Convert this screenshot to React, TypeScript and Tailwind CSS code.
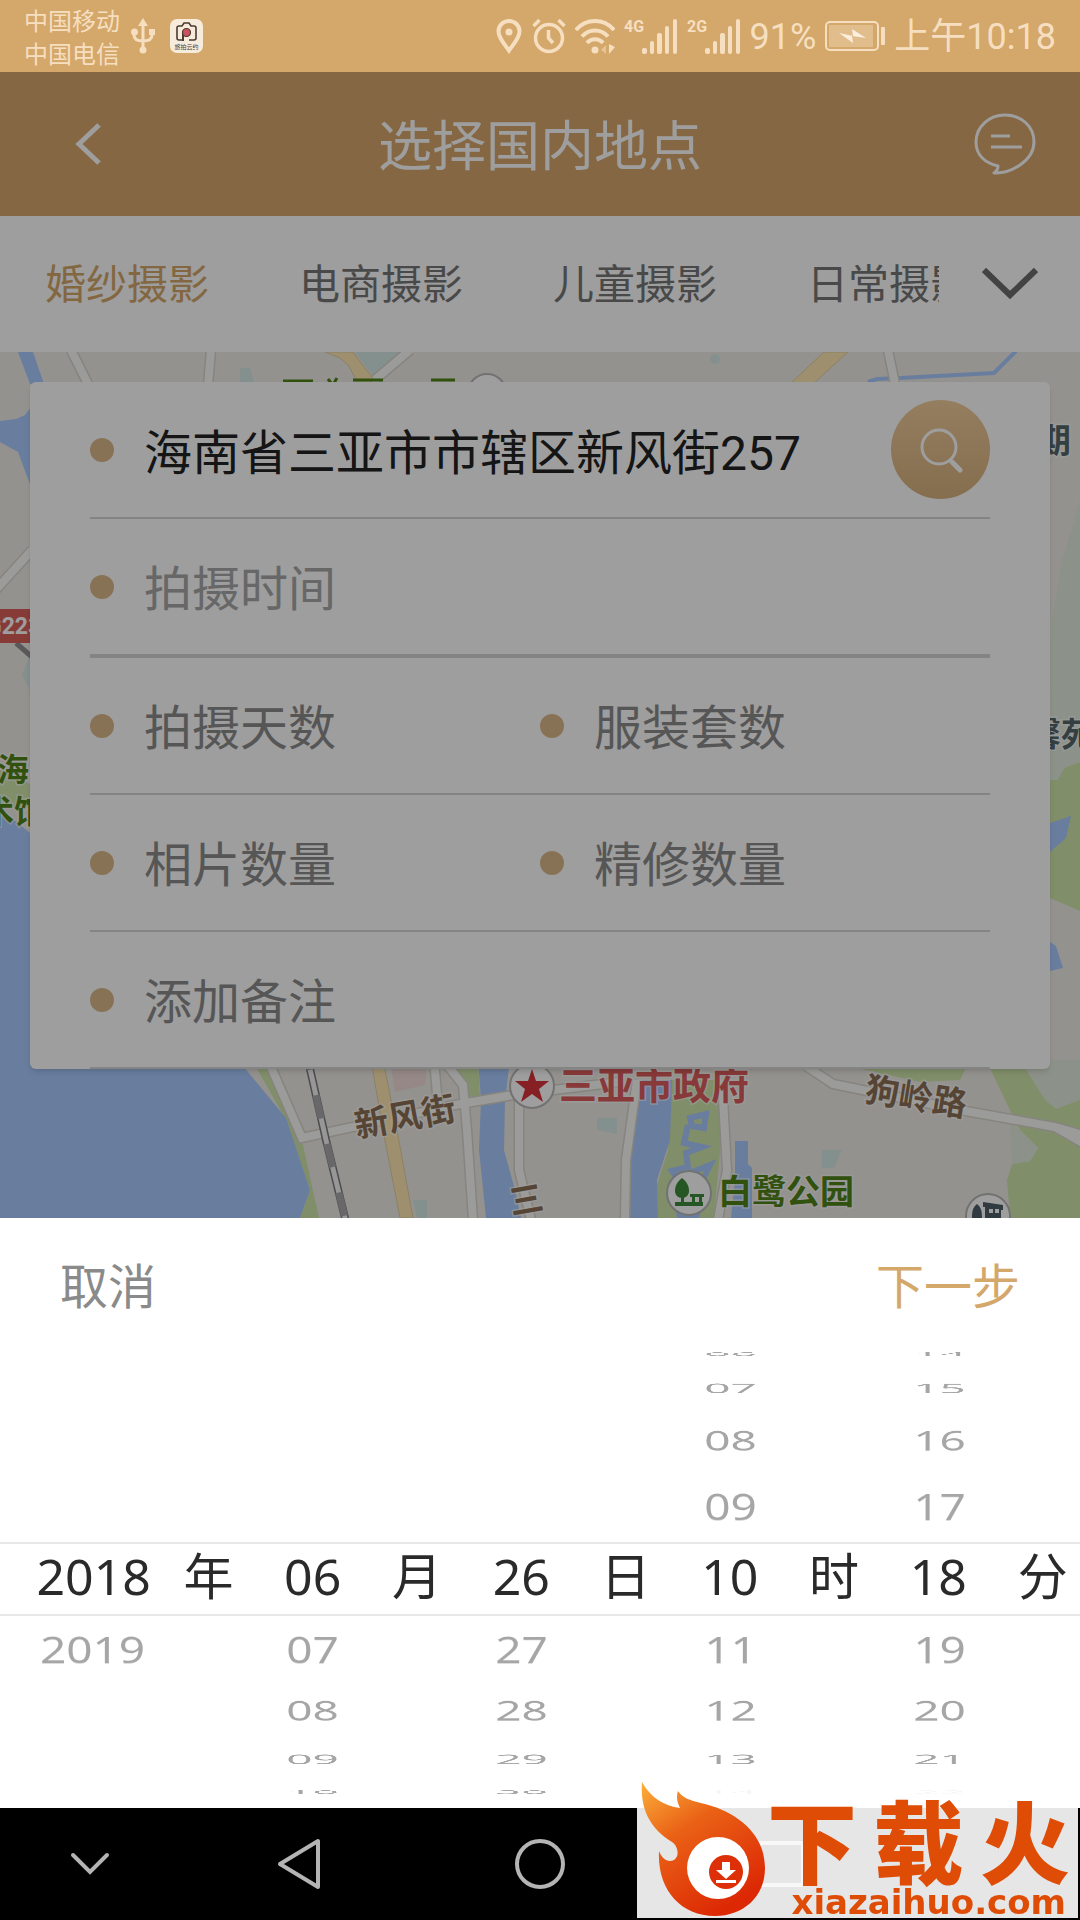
import React, { useState } from 'react';
import clsx from 'clsx';

const TABS = ['婚纱摄影', '电商摄影', '儿童摄影', '日常摄影'];

type WheelRow = { size: string; tilt: string; values: string[] };

// values are year, month, day, hour, minute
const ROWS_ABOVE: WheelRow[] = [
  { size: 'h-6', tilt: 'rotate-x-[84deg]', values: ['', '', '', '06', '14'] },
  { size: 'h-11', tilt: 'rotate-x-[73deg]', values: ['', '', '', '07', '15'] },
  { size: 'h-15', tilt: 'rotate-x-[54deg]', values: ['', '', '', '08', '16'] },
  { size: 'h-18', tilt: 'rotate-x-[37deg]', values: ['', '', '', '09', '17'] },
];

const ROWS_BELOW: WheelRow[] = [
  { size: 'h-[66px]', tilt: 'rotate-x-[37deg]', values: ['2019', '07', '27', '11', '19'] },
  { size: 'h-14', tilt: 'rotate-x-[54deg]', values: ['', '08', '28', '12', '20'] },
  { size: 'h-[42px]', tilt: 'rotate-x-[73deg]', values: ['', '09', '29', '13', '21'] },
  { size: 'h-6', tilt: 'rotate-x-[84deg]', values: ['', '10', '30', '14', '22'] },
];

const SELECTED = [
  { value: '2018', unit: '年' },
  { value: '06', unit: '月' },
  { value: '26', unit: '日' },
  { value: '10', unit: '时' },
  { value: '18', unit: '分' },
];

const WHEEL_GRID = 'grid grid-cols-[189fr_42fr_167fr_42fr_167fr_42fr_167fr_42fr_167fr_42fr_13fr]';

const SignalIcon = ({ label }: { label: string }) => (
  <svg width="54" height="36" viewBox="0 0 54 36" fill="currentColor">
    <text x="0" y="14" fontSize="16" fontWeight="700">{label}</text>
    <rect x="18" y="30" width="5" height="6" rx="2" />
    <rect x="26" y="23" width="4" height="13" rx="2" />
    <rect x="33" y="15" width="5" height="21" rx="2" />
    <rect x="41" y="8" width="4" height="28" rx="2" />
    <rect x="49" y="1" width="4" height="35" rx="2" />
  </svg>
);

const StatusBar = () => (
  <div className="flex h-18 items-center justify-between bg-[#d4a76a] px-6 text-[#f6dfc1]">
    <div className="flex items-center gap-[11px]">
      <div className="pt-1.5 text-2xl leading-[33px]">
        <div>中国移动</div>
        <div>中国电信</div>
      </div>
      <svg width="24" height="36" viewBox="0 0 24 36" fill="none" stroke="currentColor" strokeWidth="3">
        <path d="M12 5v26M3 14v3c0 4 3 6 9 6s9-2 9-6v-3" />
        <path d="M12 0l5 8H7z" fill="currentColor" stroke="none" />
        <circle cx="3.500" cy="14" r="3.500" fill="currentColor" stroke="none" />
        <rect x="18" y="11" width="6" height="6" fill="currentColor" stroke="none" />
        <circle cx="12" cy="32" r="3.500" fill="currentColor" stroke="none" />
      </svg>
      <svg className="ml-1" width="33" height="34" viewBox="0 0 33 34">
        <rect width="33" height="34" rx="7" fill="#f7ecdc" />
        <path d="M13 21H9c-1.500 0-2-1-2-2V9c0-1.500 1-2 2-2h3l2-3h5l2 3h3c1 0 2 1 2 2v10c0 1-1 2-2 2h-5" fill="none" stroke="#4a3a34" strokeWidth="1.600" />
        <path d="M13 22V13" stroke="#4a3a34" strokeWidth="2" />
        <circle cx="16.500" cy="13.500" r="4" fill="#c9535c" stroke="#4a3a34" strokeWidth="1.200" />
        <text x="16.500" y="30" fontSize="6" textAnchor="middle" fill="#4a3a34">旅拍云约</text>
      </svg>
    </div>
    <div className="flex items-center gap-[9px]">
      <svg width="28" height="36" viewBox="0 0 28 36">
        <path d="M14 3c6 0 10.500 4.500 10.500 10.500C24.500 20 18 27 14 32.500 10 27 3.500 20 3.500 13.500 3.500 7.500 8 3 14 3z" fill="none" stroke="currentColor" strokeWidth="4" />
        <circle cx="14" cy="14" r="3.500" fill="currentColor" />
      </svg>
      <svg width="34" height="36" viewBox="0 0 34 36" fill="none" stroke="currentColor" strokeWidth="3.500">
        <circle cx="17" cy="20" r="13.500" />
        <path d="M16.500 12v8l4.500 5M1.500 8l6-6M32.500 8l-6-6" strokeWidth="3.500" />
      </svg>
      <svg width="40" height="36" viewBox="0 0 40 36" fill="none" stroke="currentColor" strokeWidth="4">
        <path d="M1 12C11 0 29 0 39 12M7 18.500c7-8 19-8 26 0M12 25c4-5 12-5 16 0" />
        <circle cx="20" cy="32" r="3.500" fill="currentColor" stroke="none" />
        <path d="M34 26v10l6-7z" fill="currentColor" stroke="none" />
        <path d="M31 27v9l-5-4z" fill="currentColor" stroke="none" opacity=".5" />
      </svg>
      <SignalIcon label="4G" />
      <SignalIcon label="2G" />
      <span className="pt-0.5 text-4xl leading-none">91%</span>
      <svg width="60" height="32" viewBox="0 0 60 32">
        <rect x="1" y="2" width="52" height="28" rx="4" fill="none" stroke="currentColor" strokeWidth="2" />
        <rect x="4" y="5" width="44" height="22" fill="currentColor" opacity=".4" />
        <path d="M14 13l14 3-1-7 14 9-14-2 1 7z" fill="#fbeedd" />
        <rect x="56" y="7" width="4" height="18" rx="1" fill="currentColor" />
      </svg>
      <span className="pt-0.5 text-4xl leading-none">上午10:18</span>
    </div>
  </div>
);

const POND = 'M690 1118l16-4-2 14-12-2zM688 1125l-4 18 18 4-16 6 2 14-16 4 8 12M700 1185l10-20-20 8';

const MapCanvas = () => (
  <svg
    className="absolute inset-0 size-full"
    viewBox="0 352 1080 866"
    preserveAspectRatio="xMidYMin slice"
    fontFamily="Roboto, 'Noto Sans CJK SC', sans-serif"
    aria-hidden="true"
  >
    <rect y="352" width="1080" height="866" fill="#efece5" />

    {/* parks and blocks */}
    <g fill="#d0e5ab">
      <path d="M252 1060h14l19 45 18 40 16 73h-19l10-28-25-72z" />
      <path d="M454 1060h24l2 38-14-2z" />
      <path d="M672 1080h50v50l-8 88h-56l-1-33 11-35z" />
      <path d="M820 1060h150l-10 20-40 2z" />
      <path d="M986 1060h94v158h-70l-3-38 5-16 18-3 8-13-18-18-15-30z" />
      <path d="M0 770l30 14v24H0z" />
      <path d="M1050 779l8-1 6-10 16-6v149l-30-13z" />
    </g>
    <path d="M1080 500l-18 60-10 60-2 160h8l6-12 16-6zM1020 1060l25 40 11 9 24-9v-40zM1010 1120l28 28-8 13-18 3z" fill="#e3ebdd" />
    <path d="M390 1060h37l-2 25-30 7z" fill="#f0dcd9" />
    <g fill="#d5e8e6">
      <path d="M355 352h45l-27 24zM240 368h10l4 14h-14z" />
      <path d="M30 655l-8 20 8 16zM597 1118h20v16l-20-4zM822 1150h20l-8 18h-12zM413 1200h14v18h-10z" />
      <circle cx="715" cy="359" r="5" />
    </g>

    {/* water */}
    <g fill="#aacaff">
      <path d="M18 352h15l11 32H30zM0 421l16-2 9-4 6-8v80l-13-35-18-10z" />
      <path d="M0 815l14 5 16 13 208 227 48 58 24 72-10 28H0z" />
      <path d="M478 1060h32l-5 40-1 50 11 40 6 28h-35l-7-68 2-50z" />
      <path d="M642 1080h30l-2 60-13 40 1 38h-28l-1-53 6-35z" />
      <path d="M735 1141h13v23l4 4v50h-21l4-38z" />
      <path d="M1050 823l21-7-5 22-16 14zM1050 942l6 4 7 22-13 3z" />
      <path d="M675 1205h28l-4 13h-22z" />
    </g>
    <path d="M868 382l9-3 23-1 94-5 22-22" fill="none" stroke="#aacaff" strokeWidth="4" />
    <path d={POND} fill="none" stroke="#aacaff" strokeWidth="6" />

    {/* roads */}
    <g fill="none" stroke="#d9d5cc" strokeWidth="11">
      <path d="M71 350l18 36M211 350l-3 36M410 350l-40 34M888 350l7 34M32 550l-40 44" />
      <path d="M268 1060l34 78 158-34 60-10 100-12M434 1060l4 45M448 1066l15 19 4 45 6 90M519 1096v74l12 50M637 1080l-11 80-1 60M722 1080l5 90-9 50M806 1066l27 18 127 26 95 17 28 16M1055 1127l28 8" />
    </g>
    <g fill="none" stroke="#fbfbf9" strokeWidth="8">
      <path d="M71 350l18 36M211 350l-3 36M410 350l-40 34M888 350l7 34M32 550l-40 44" />
      <path d="M268 1060l34 78 158-34 60-10 100-12M434 1060l4 45M448 1066l15 19 4 45 6 90M519 1096v74l12 50M637 1080l-11 80-1 60M722 1080l5 90-9 50M806 1066l27 18 127 26 95 17 28 16M1055 1127l28 8" />
    </g>
    <path d="M325 352h28l21 28-14 6-12-21-8-7zM824 352h24l-35 32h-23zM371 1060h12l14 70 16 88h-13l-17-88z" fill="#ffe9b4" stroke="#e0cfa4" strokeWidth="1" />
    <path d="M308 1060l18 80 20 82" fill="none" stroke="#7d7d80" strokeWidth="8" />
    <path d="M308 1060l18 80 20 82" fill="none" stroke="#f4f4f4" strokeWidth="5" />
    <path d="M308 1060l18 80 20 82" fill="none" stroke="#a9a9ac" strokeWidth="7" strokeDasharray="24 26" strokeDashoffset="14" />
    <path d="M16 643l16 14" stroke="#909090" strokeWidth="5" />

    {/* road number and labels */}
    <rect y="609" width="40" height="34" fill="#d9605a" />
    <text x="-14" y="634" fontSize="23" fontWeight="700" fill="#ffffff">G223</text>
    <g fontWeight="700" stroke="#ffffff" strokeOpacity=".6" strokeWidth="3" paintOrder="stroke">
      <g fill="#4f8419">
        <text x="-3" y="781" fontSize="32">海</text>
        <text x="-18" y="823" fontSize="32">术馆</text>
        <text x="718" y="1204" fontSize="34">白鹭公园</text>
      </g>
      <g fill="#55676a">
        <text x="1037" y="453" fontSize="34">期</text>
        <text x="1028" y="746" fontSize="33">馨苑</text>
      </g>
      <text x="559" y="1099" fontSize="38" fill="#dc5c5c">三亚市政府</text>
      <g fill="#8b7056" fontSize="34" textAnchor="middle">
        <text transform="rotate(-10 405 1117)" x="405" y="1129">新风街</text>
        <text transform="rotate(9 916 1097)" x="916" y="1109">狗岭路</text>
        <text transform="rotate(-10 526 1199)" x="526" y="1212">三</text>
      </g>
    </g>
    <path d="M283 381h30M353 380h30M431 380h24M328 379l3 4M337 378l-3 5" stroke="#4f8419" strokeWidth="3" />

    {/* places */}
    <g fill="#ffffff" stroke="#b8b8b8" strokeWidth="2">
      <circle cx="487" cy="393" r="19" />
      <circle cx="532" cy="1086" r="22" />
      <circle cx="689" cy="1193" r="22" />
      <circle cx="988" cy="1216" r="22" />
    </g>
    <path d="M532 1069l4 12 13 0-10 8 4 13-11-8-11 8 4-13-10-8 13 0z" fill="#d8343d" />
    <g fill="#3f8c3c">
      <path d="M682 1178c5 4 7 8 7 13 0 4-3 7-7 7s-7-3-7-7c0-5 2-9 7-13z" />
      <path d="M681 1192h3v12h-3zM675 1202h28v4h-28zM690 1194h14v3h-14zM692 1197h3v6h-3zM699 1197h3v6h-3z" />
    </g>
    <g fill="#4c6069">
      <path d="M977 1204c4 3 5 7 5 14h-10c0-7 1-11 5-14zM983 1202l20 3v5h-2v8h-16v-11h-2z" />
      <path d="M989 1209h4v4h-4zM995 1209h4v4h-4z" fill="#ffffff" />
    </g>
  </svg>
);

const Dot = () => <span className="size-6 shrink-0 rounded-full bg-[#dcb98a]" />;

interface FieldProps {
  label: string;
  value?: string;
  faint?: boolean;
}

const Field: React.FC<FieldProps> = ({ label, value, faint }) => (
  <label className="flex h-[135px] min-w-0 flex-1 items-center gap-[30px]">
    <Dot />
    <input
      type="text"
      aria-label={label}
      placeholder={label}
      defaultValue={value}
      className={clsx(
        'h-20 w-full min-w-0 bg-transparent text-5xl text-[#222222] outline-none',
        value ? 'pb-0.5' : 'pt-1.5',
        faint ? 'placeholder:text-[#a6a6a6]' : 'placeholder:text-[#8c8c8c]'
      )}
    />
  </label>
);

const BookingCard = () => (
  <form className="relative rounded-md bg-white px-15 shadow-md" onSubmit={(e) => e.preventDefault()}>
    <div className="flex items-center border-b-2 border-[#d6d6d6]">
      <Field label="拍摄地点" value="海南省三亚市市辖区新风街257" />
      <button
        type="submit"
        aria-label="搜索"
        className="flex size-[99px] shrink-0 items-center justify-center rounded-full bg-linear-to-b from-[#f1cc9b] to-[#d6b27e]"
      >
        <svg width="46" height="46" viewBox="0 0 46 46" fill="none" stroke="#ffffff" strokeLinecap="round">
          <circle cx="21" cy="20" r="17" strokeWidth="3" />
          <path d="M34 35l8 8" strokeWidth="5" />
        </svg>
      </button>
    </div>
    <div className="flex border-b-4 border-[#d6d6d6]">
      <Field label="拍摄时间" faint />
    </div>
    <div className="grid grid-cols-2 border-b-2 border-[#d6d6d6]">
      <Field label="拍摄天数" />
      <Field label="服装套数" />
    </div>
    <div className="grid grid-cols-2 border-b-2 border-[#d6d6d6]">
      <Field label="相片数量" />
      <Field label="精修数量" />
    </div>
    <div className="flex border-b-2 border-[#d6d6d6]">
      <Field label="添加备注" />
    </div>
  </form>
);

const FadedRow: React.FC<{ row: WheelRow }> = ({ row }) => (
  <div className={clsx(WHEEL_GRID, row.size)}>
    {row.values.map((value, i) => (
      <div key={i} className="col-span-2 grid grid-cols-subgrid items-center">
        <span className={clsx('pr-1 text-center text-[46px] leading-6 text-[#a6a6a6]', row.tilt)}>{value}</span>
      </div>
    ))}
  </div>
);

const DateSheet = () => (
  <section className="overflow-hidden bg-white">
    <div className="flex h-31 items-center justify-between px-15 pt-4 text-5xl">
      <button type="button" className="text-[#8a8a8a]">取消</button>
      <button type="button" className="text-[#d4a76a]">下一步</button>
    </div>
    <div className="pb-1 font-['Noto_Sans','Noto_Sans_CJK_SC',sans-serif]">
      {ROWS_ABOVE.map((row) => <FadedRow key={row.tilt} row={row} />)}
      <div className={clsx(WHEEL_GRID, 'h-[74px] border-y-2 border-[#e8e8e8] pb-1.5 pl-1 text-[#2a2a2a]')}>
        {SELECTED.map(({ value, unit }) => (
          <div key={unit} className="col-span-2 grid grid-cols-subgrid items-center leading-none">
            <span className="text-center text-[50px]">{value}</span>
            <span className="flex justify-center text-[50px] whitespace-nowrap">{unit}</span>
          </div>
        ))}
      </div>
      {ROWS_BELOW.map((row) => <FadedRow key={row.tilt} row={row} />)}
    </div>
  </section>
);

const NavBar = () => (
  <nav className="flex h-28 items-center justify-between bg-black px-15 text-[#b4b4b4]">
    <button type="button" aria-label="收起" className="flex w-15 justify-center">
      <svg width="40" height="26" viewBox="0 0 40 26" fill="none" stroke="currentColor" strokeWidth="4" strokeLinecap="round">
        <path d="M3 4l17 17L37 4" />
      </svg>
    </button>
    <button type="button" aria-label="返回" className="flex w-15 justify-center">
      <svg width="46" height="54" viewBox="0 0 46 54" fill="none" stroke="currentColor" strokeWidth="4" strokeLinejoin="round">
        <path d="M42 4v46L4 27z" />
      </svg>
    </button>
    <button type="button" aria-label="主页" className="mx-8 flex w-15 justify-center">
      <svg width="52" height="52" viewBox="0 0 52 52" fill="none" stroke="currentColor" strokeWidth="4">
        <circle cx="26" cy="26" r="23" />
      </svg>
    </button>
    <button type="button" aria-label="最近任务" className="flex w-15 justify-center">
      <svg width="52" height="52" viewBox="0 0 52 52" fill="none" stroke="currentColor" strokeWidth="4">
        <rect x="4" y="5" width="44" height="42" rx="2" />
      </svg>
    </button>
    <span className="w-15" />
  </nav>
);

const Watermark = () => (
  <div className="absolute right-0.5 bottom-0.5 flex h-[140px] w-[441px] items-end bg-white/90 pr-2 text-[#de4c05]">
    <svg className="ml-1 shrink-0" width="126" height="136" viewBox="0 0 126 136">
      <defs>
        <linearGradient id="flame" x1="0" y1="0" x2=".6" y2="1">
          <stop offset="0" stopColor="#fbb03b" />
          <stop offset=".4" stopColor="#ea6216" />
          <stop offset="1" stopColor="#dc2804" />
        </linearGradient>
      </defs>
      <path
        d="M1 0c9 16 22 24 38 26-3-6-4-11-2-17 8 12 24 10 42 18 28 12 45 32 45 59 0 29-22 48-50 48-35 0-58-27-56-65 3 8 9 12 15 9 6-4 4-14-2-18C8 46-1 26 1 0z"
        fill="url(#flame)"
      />
      <circle cx="77" cy="86" r="31" fill="#ffffff" />
      <circle cx="85" cy="90" r="17" fill="#de3008" />
      <path d="M81 80h8v8h6l-10 9-10-9h6zM75 98h20v3H75z" fill="#ffffff" />
    </svg>
    <div className="flex flex-1 flex-col">
      <div className="flex justify-between text-[90px] leading-[78px] font-black">
        <span>下</span>
        <span>载</span>
        <span>火</span>
      </div>
      <div className="pr-1 text-right font-['DejaVu_Sans',sans-serif] text-[34px] leading-8 font-bold">xiazaihuo.com</div>
    </div>
  </div>
);

export default function App() {
  const [activeTab, setActiveTab] = useState(TABS[0]);

  return (
    <div className="relative overflow-hidden bg-white font-['Roboto','Noto_Sans_CJK_SC',sans-serif]">
      <StatusBar />
      <div className="relative">
        <header className="flex h-36 items-center justify-between bg-[#d7a96d] px-11 text-white">
          <button type="button" aria-label="返回" className="flex w-22 justify-center">
            <svg width="28" height="42" viewBox="0 0 28 42" fill="none" stroke="currentColor" strokeWidth="5">
              <path d="M25 2L5 21l20 19" />
            </svg>
          </button>
          <h1 className="pt-2 text-[54px] leading-none">选择国内地点</h1>
          <button type="button" aria-label="消息" className="flex w-22 justify-end">
            <svg width="62" height="62" viewBox="0 0 62 62" fill="none" stroke="currentColor" strokeWidth="3" strokeLinejoin="round">
              <path d="M24 53c0 3-1 5-4 7 16 1 40-12 40-31C60 13 47 2 31 2S2 14 2 29c0 13 9 21 22 24z" />
              <path d="M17 23h19M17 34h31" />
            </svg>
          </button>
        </header>

        <div className="flex h-34 items-center bg-white">
          <div className="flex min-w-0 flex-1 overflow-hidden pt-1">
            {TABS.map((tab) => (
              <button
                key={tab}
                type="button"
                onClick={() => setActiveTab(tab)}
                className={clsx(
                  'shrink-0 px-[45px] text-[41px] whitespace-nowrap',
                  tab === activeTab ? 'text-[#d4a76a]' : 'text-[#777777]'
                )}
              >
                {tab}
              </button>
            ))}
          </div>
          <button type="button" aria-label="更多分类" className="flex w-[141px] justify-center text-[#6c6c6c]">
            <svg width="56" height="34" viewBox="0 0 56 34" fill="none" stroke="currentColor" strokeWidth="6">
              <path d="M2 3l26 25L54 3" />
            </svg>
          </button>
        </div>

        <main className="relative overflow-hidden px-[30px] pt-[30px] pb-[149px]">
          <MapCanvas />
          <BookingCard />
        </main>

        {/* dims everything behind the sheet */}
        <div className="pointer-events-none absolute inset-0 bg-black/38" />
      </div>
      <DateSheet />
      <NavBar />
      <Watermark />
    </div>
  );
}
